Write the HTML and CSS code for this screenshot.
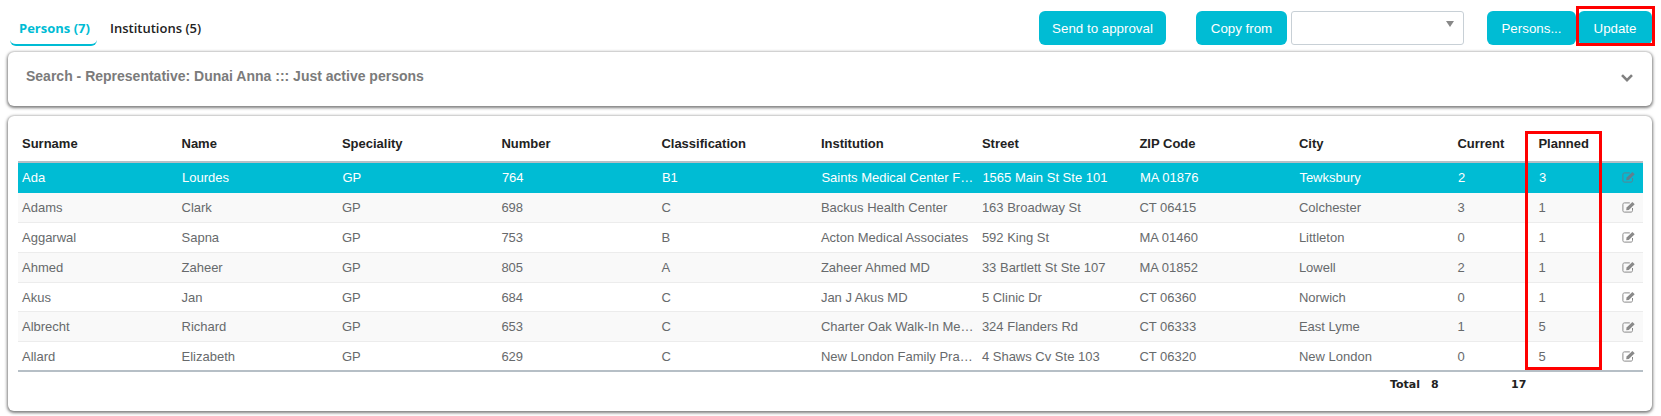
FILE: index.html
```html
<!DOCTYPE html>
<html lang="en">
<head>
<meta charset="utf-8">
<title>Persons</title>
<link rel="stylesheet" href="styles.css">
</head>
<body>
<svg class="defs" width="0" height="0" aria-hidden="true"><symbol id="edit" viewBox="0 0 14 12"><path d="M10.5 7v2.6c0 .9-.6 1.5-1.5 1.5H2.4c-.9 0-1.5-.6-1.5-1.5V3.4c0-.9.6-1.5 1.5-1.5h5.4" fill="none" stroke="currentColor" stroke-width="1"/><path d="M4.6 6.6 10.4 1l2.3 2.2-5.9 5.7-2.6.4z" fill="currentColor"/></symbol></svg>
<header class="toolbar">
  <nav class="tabs">
    <a class="tab active">Persons (7)</a>
    <a class="tab">Institutions (5)</a>
  </nav>
  <div class="actions">
    <button class="btn send">Send to approval</button>
    <button class="btn copy">Copy from</button>
    <div class="select"><span class="caret"></span></div>
    <button class="btn persons">Persons...</button>
    <button class="btn update">Update</button>
  </div>
</header>
<section class="card search">
  <span class="search-title">Search - Representative: Dunai Anna ::: Just active persons</span>
  <svg class="chevron" viewBox="0 0 14 10" width="14" height="10"><path d="M2 2.2 7 7.2 12 2.2" fill="none" stroke="currentColor" stroke-width="2.6"/></svg>
</section>
<section class="card results">
  <div class="table-wrap">
  <table>
    <thead>
      <tr><th>Surname</th><th>Name</th><th>Speciality</th><th>Number</th><th>Classification</th><th>Institution</th><th>Street</th><th>ZIP Code</th><th>City</th><th>Current</th><th>Planned</th><th></th></tr>
    </thead>
    <tbody>
      <tr class="selected"><td>Ada</td><td>Lourdes</td><td>GP</td><td>764</td><td>B1</td><td>Saints Medical Center Family Practice</td><td>1565 Main St Ste 101</td><td>MA 01876</td><td>Tewksbury</td><td>2</td><td>3</td><td class="icon"><svg width="14" height="12"><use href="#edit"/></svg></td></tr>
      <tr><td>Adams</td><td>Clark</td><td>GP</td><td>698</td><td>C</td><td>Backus Health Center</td><td>163 Broadway St</td><td>CT 06415</td><td>Colchester</td><td>3</td><td>1</td><td class="icon"><svg width="14" height="12"><use href="#edit"/></svg></td></tr>
      <tr><td>Aggarwal</td><td>Sapna</td><td>GP</td><td>753</td><td>B</td><td>Acton Medical Associates</td><td>592 King St</td><td>MA 01460</td><td>Littleton</td><td>0</td><td>1</td><td class="icon"><svg width="14" height="12"><use href="#edit"/></svg></td></tr>
      <tr><td>Ahmed</td><td>Zaheer</td><td>GP</td><td>805</td><td>A</td><td>Zaheer Ahmed MD</td><td>33 Bartlett St Ste 107</td><td>MA 01852</td><td>Lowell</td><td>2</td><td>1</td><td class="icon"><svg width="14" height="12"><use href="#edit"/></svg></td></tr>
      <tr><td>Akus</td><td>Jan</td><td>GP</td><td>684</td><td>C</td><td>Jan J Akus MD</td><td>5 Clinic Dr</td><td>CT 06360</td><td>Norwich</td><td>0</td><td>1</td><td class="icon"><svg width="14" height="12"><use href="#edit"/></svg></td></tr>
      <tr><td>Albrecht</td><td>Richard</td><td>GP</td><td>653</td><td>C</td><td>Charter Oak Walk-In Medical Center</td><td>324 Flanders Rd</td><td>CT 06333</td><td>East Lyme</td><td>1</td><td>5</td><td class="icon"><svg width="14" height="12"><use href="#edit"/></svg></td></tr>
      <tr><td>Allard</td><td>Elizabeth</td><td>GP</td><td>629</td><td>C</td><td>New London Family Practice</td><td>4 Shaws Cv Ste 103</td><td>CT 06320</td><td>New London</td><td>0</td><td>5</td><td class="icon"><svg width="14" height="12"><use href="#edit"/></svg></td></tr>
    </tbody>
  </table>
  <div class="highlight"></div>
  </div>
  <div class="totals"><b class="total-label">Total</b><b class="total-current">8</b><b class="total-planned">17</b></div>
</section>
</body>
</html>
```
FILE: styles.css
```css
* { box-sizing: border-box; }
html, body { margin: 0; padding: 0; }
body { width: 1661px; height: 416px; overflow: hidden; background: #fff; font-family: "Liberation Sans", Arial, sans-serif; font-size: 13px; color: #676a6c; }
.defs { position: absolute; }
.toolbar { display: flex; justify-content: space-between; height: 52px; padding: 11px 9px 0 10px; }
.tabs { display: flex; align-items: flex-start; }
.tab { display: block; height: 35px; padding: 9px 9px 0; font-family: "Open Sans", sans-serif; font-size: 13px; font-weight: 600; line-height: 16px; color: #222; white-space: nowrap; }
.tab.active { width: 87px; font-weight: 700; color: #00bcd4; border-bottom: 2px solid #00bcd4; border-radius: 0 0 6px 6px; }
.tab + .tab { padding-left: 13px; }
.actions { display: flex; align-items: flex-start; }
.btn { height: 34px; padding: 0; border: 0; border-radius: 6px; background: #00bcd4; color: #fff; font-family: "Liberation Sans", Arial, sans-serif; font-size: 13.33px; }
.send { width: 127px; margin-right: 30px; }
.copy { width: 91px; margin-right: 4px; }
.select { position: relative; width: 173px; height: 34px; margin-right: 23px; border: 1px solid #c8d0d6; border-radius: 3px; background: #fff; }
.caret { position: absolute; top: 9px; right: 9px; border: 4px solid transparent; border-top: 6px solid #888; border-bottom: 0; }
.persons { width: 89px; margin-right: 2px; }
.update { position: relative; width: 74px; }
.update::after { content: ""; position: absolute; top: -5px; left: -2px; right: -3px; bottom: -1px; border: 3px solid #f00; }
.card { margin: 0 9px 0 8px; background: #fff; border-radius: 6px; box-shadow: 0 1px 3px 1px rgba(0,0,0,.5); }
.search { display: flex; align-items: center; justify-content: space-between; height: 54px; padding: 0 18px; margin-bottom: 10px; }
.search-title { position: relative; top: -3px; font-size: 14px; font-weight: 700; color: #7b7b7b; }
.chevron { color: #808080; position: relative; top: -1px; }
.results { height: 295px; padding: 10px 10px 0; }
.table-wrap { position: relative; }
table { width: 1625px; border-collapse: separate; border-spacing: 0; table-layout: fixed; }
th:nth-child(1) { width: 159.5px; }
th:nth-child(2) { width: 160.4px; }
th:nth-child(3) { width: 159.5px; }
th:nth-child(4) { width: 160px; }
th:nth-child(5) { width: 159.5px; }
th:nth-child(6) { width: 161px; }
th:nth-child(7) { width: 157.5px; }
th:nth-child(8) { width: 159.5px; }
th:nth-child(9) { width: 158.5px; }
th:nth-child(10) { width: 81px; }
th:nth-child(11) { width: 81px; }
th { height: 37px; padding: 0 4px; text-align: left; font-size: 13px; font-weight: 700; color: #222; border-bottom: 2px solid #b6bfc6; }
td { height: 29.9px; padding: 0 1px 0 4px; white-space: nowrap; overflow: hidden; text-overflow: ellipsis; border-bottom: 1px solid #ececec; }
tbody tr:nth-child(even) { background: #f9f9f9; }
tbody tr:last-child td { border-bottom: 2px solid #b6bfc6; }
tr.selected { background: #00bcd4; color: #fff; }
tr.selected td { border-bottom-color: #00bcd4; }
tr.selected td:not(:first-child) { padding-left: 4.5px; }
.icon { color: #8a8a8a; padding-right: 7px; }
.icon svg { display: block; margin-left: auto; }
.selected .icon { color: #5f8090; }
.highlight { position: absolute; left: 1507px; top: 5px; width: 77px; height: 239px; border: 3px solid #f00; pointer-events: none; }
.totals { display: flex; height: 24px; font-family: "DejaVu Sans", sans-serif; font-size: 11px; color: #222; align-items: center; }
.total-label { margin-left: 1372px; width: 41px; }
.total-current { width: 80px; }
```
